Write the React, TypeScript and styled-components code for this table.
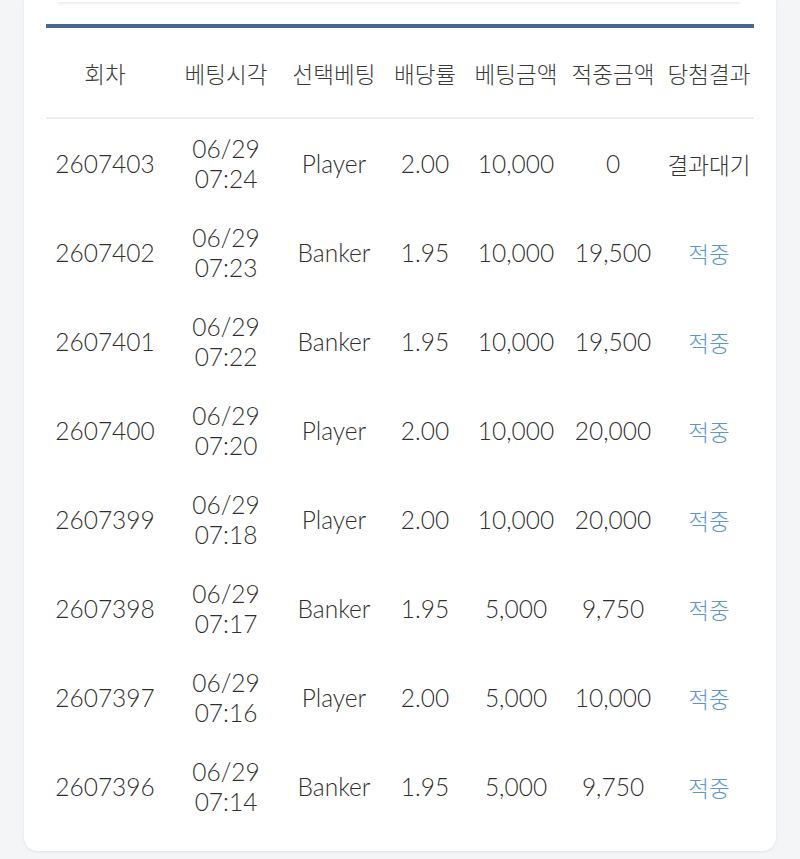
import React from "react";
import styled, { createGlobalStyle } from "styled-components";

const Global = createGlobalStyle`
  html, body { margin: 0; padding: 0; background: #f4f5f7; }
  body { font-family: Lato, "Noto Sans CJK KR", sans-serif; color: #333; }
`;

const Page = styled.div`
  padding: 0 24px 8px;
`;

const Card = styled.section`
  background: #fff;
  border-radius: 0 0 14px 14px;
  box-shadow: 0 1px 3px rgba(0, 0, 0, 0.08);
  padding: 0 22px 20px;
`;

const FilterEdge = styled.div`
  height: 2px;
  margin: 0 14px 0 12px;
  background: #fff;
  box-shadow: 0 1px 3px rgba(0, 0, 0, 0.14);
`;

const Table = styled.div`
  margin-top: 22px;
  border-top: 4px solid #4a6593;
`;

const cols = "118px 124px 92px 90px 92px 102px 1fr";

const HeadRow = styled.div`
  display: grid;
  grid-template-columns: ${cols};
  height: 89px;
  align-items: center;
  border-bottom: 2px solid #ececec;
`;

const HeadCell = styled.div`
  text-align: center;
  font-family: "Noto Sans CJK KR", sans-serif;
  font-weight: 300;
  font-size: 22.5px;
  color: #3a3a3a;
  white-space: nowrap;
`;

const Row = styled.div`
  display: grid;
  grid-template-columns: ${cols};
  height: 89px;
  align-items: center;
`;

const Cell = styled.div`
  text-align: center;
  font-family: Lato, sans-serif;
  font-weight: 300;
  font-size: 24.5px;
  color: #2f2f2f;
  white-space: nowrap;
  line-height: 30px;
`;

const Status = styled.div<{ $win?: boolean }>`
  text-align: center;
  font-family: "Noto Sans CJK KR", sans-serif;
  font-weight: 300;
  font-size: 22.5px;
  color: ${(p) => (p.$win ? "#5b96d0" : "#333")};
  white-space: nowrap;
`;

type Bet = {
  round: string;
  date: string;
  time: string;
  pick: string;
  odds: string;
  amount: string;
  payout: string;
  result: string;
};

const rows: Bet[] = [
  { round: "2607403", date: "06/29", time: "07:24", pick: "Player", odds: "2.00", amount: "10,000", payout: "0", result: "결과대기" },
  { round: "2607402", date: "06/29", time: "07:23", pick: "Banker", odds: "1.95", amount: "10,000", payout: "19,500", result: "적중" },
  { round: "2607401", date: "06/29", time: "07:22", pick: "Banker", odds: "1.95", amount: "10,000", payout: "19,500", result: "적중" },
  { round: "2607400", date: "06/29", time: "07:20", pick: "Player", odds: "2.00", amount: "10,000", payout: "20,000", result: "적중" },
  { round: "2607399", date: "06/29", time: "07:18", pick: "Player", odds: "2.00", amount: "10,000", payout: "20,000", result: "적중" },
  { round: "2607398", date: "06/29", time: "07:17", pick: "Banker", odds: "1.95", amount: "5,000", payout: "9,750", result: "적중" },
  { round: "2607397", date: "06/29", time: "07:16", pick: "Player", odds: "2.00", amount: "5,000", payout: "10,000", result: "적중" },
  { round: "2607396", date: "06/29", time: "07:14", pick: "Banker", odds: "1.95", amount: "5,000", payout: "9,750", result: "적중" },
];

const headers = ["회차", "베팅시각", "선택베팅", "배당률", "베팅금액", "적중금액", "당첨결과"];

export default function App() {
  return (
    <>
      <Global />
      <Page>
        <Card>
          <FilterEdge />
          <Table>
            <HeadRow>
              {headers.map((h) => (
                <HeadCell key={h}>{h}</HeadCell>
              ))}
            </HeadRow>
            {rows.map((r) => (
              <Row key={r.round}>
                <Cell>{r.round}</Cell>
                <Cell>
                  {r.date}
                  <br />
                  {r.time}
                </Cell>
                <Cell>{r.pick}</Cell>
                <Cell>{r.odds}</Cell>
                <Cell>{r.amount}</Cell>
                <Cell>{r.payout}</Cell>
                <Status $win={r.result === "적중"}>{r.result}</Status>
              </Row>
            ))}
          </Table>
        </Card>
      </Page>
    </>
  );
}
